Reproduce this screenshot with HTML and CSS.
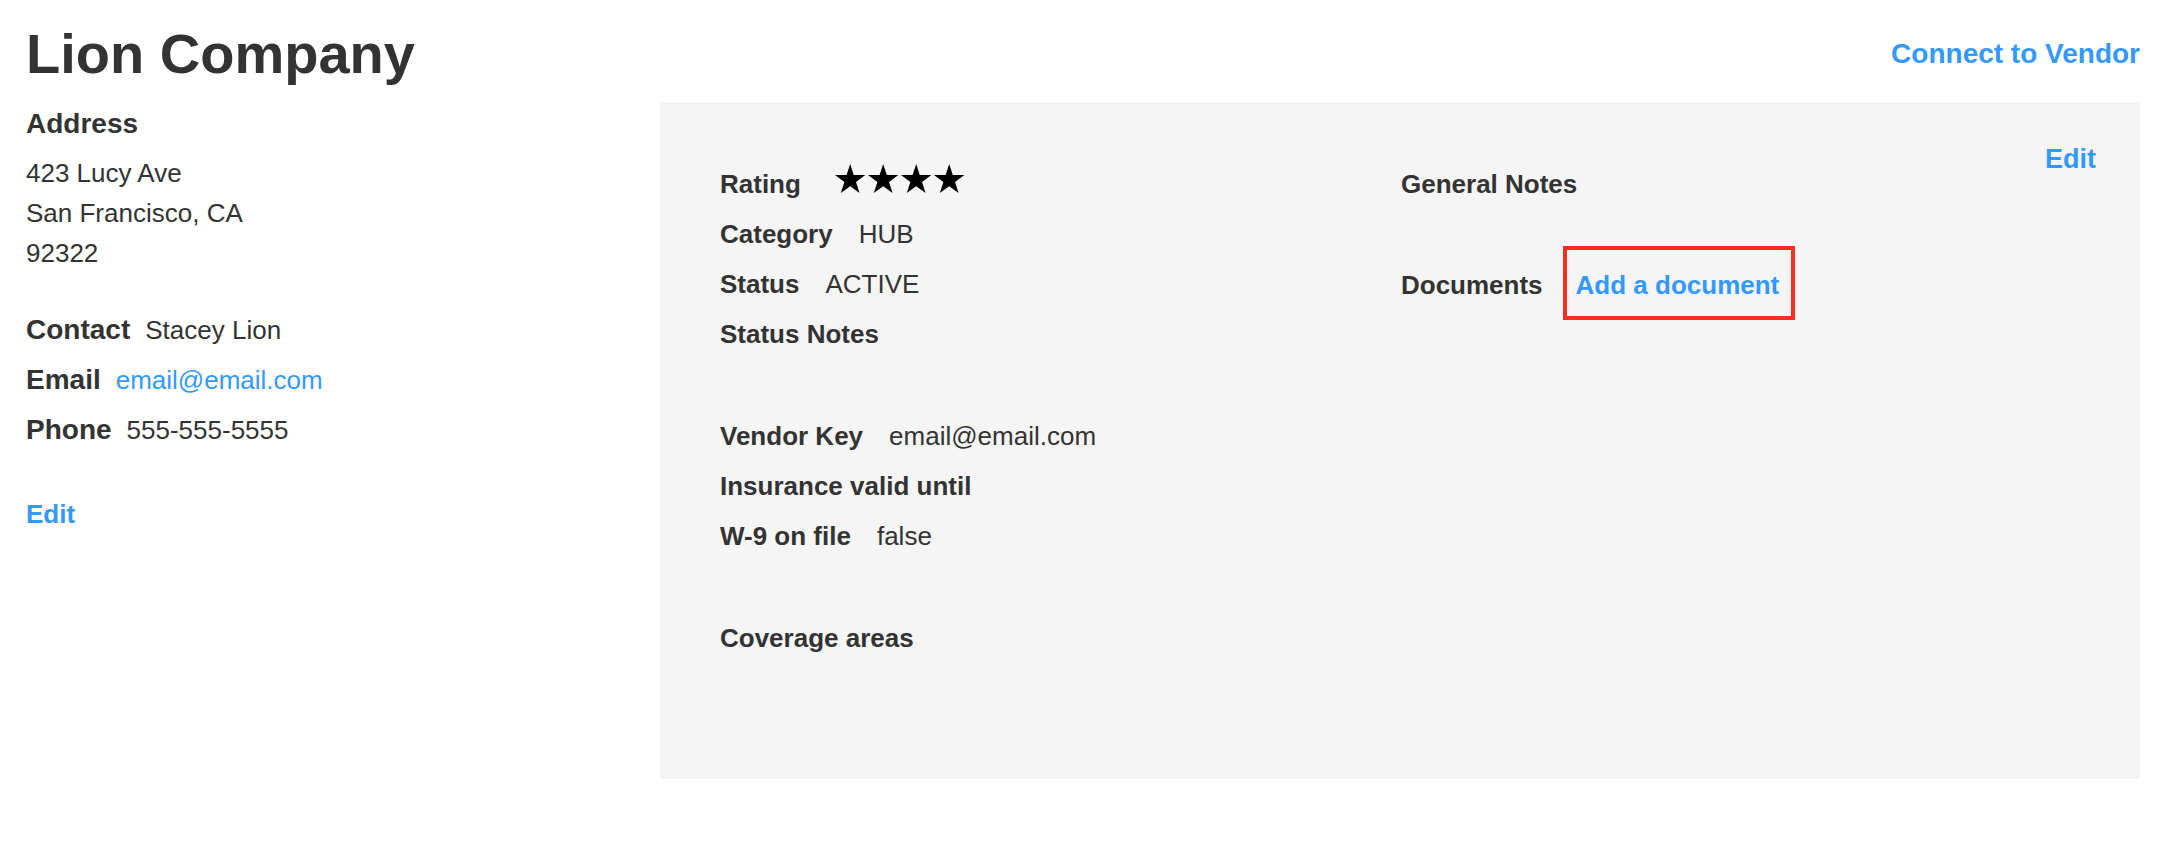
FILE: index.html
```html
<!DOCTYPE html>
<html lang="en">
<head>
<meta charset="utf-8">
<title>Lion Company</title>
<link rel="stylesheet" href="styles.css">
</head>
<body>
<div class="page">
  <header class="page-header">
    <h1 class="company-name">Lion Company</h1>
    <a class="link link-lg" href="#">Connect to Vendor</a>
  </header>

  <div class="content">
    <aside class="sidebar">
      <h2 class="section-title">Address</h2>
      <address class="address">
        <div>423 Lucy Ave</div>
        <div>San Francisco, CA</div>
        <div>92322</div>
      </address>

      <div class="contact">
        <div class="contact-row"><span class="contact-label">Contact</span><span class="contact-value">Stacey Lion</span></div>
        <div class="contact-row"><span class="contact-label">Email</span><a class="contact-value plain-link" href="#">email@email.com</a></div>
        <div class="contact-row"><span class="contact-label">Phone</span><span class="contact-value">555-555-5555</span></div>
      </div>

      <div class="sidebar-actions"><a class="link" href="#">Edit</a></div>
    </aside>

    <section class="panel">
      <a class="link panel-edit" href="#">Edit</a>

      <div class="panel-col panel-col-main">
        <div class="field-group">
          <div class="field">
            <span class="field-label">Rating</span>
            <span class="stars">
              <svg class="star" viewBox="2.45 0 95.1 90.45"><polygon points="50,0 61.23,34.55 97.55,34.55 68.16,55.9 79.39,90.45 50,69.1 20.61,90.45 31.84,55.9 2.45,34.55 38.77,34.55"/></svg>
              <svg class="star" viewBox="2.45 0 95.1 90.45"><polygon points="50,0 61.23,34.55 97.55,34.55 68.16,55.9 79.39,90.45 50,69.1 20.61,90.45 31.84,55.9 2.45,34.55 38.77,34.55"/></svg>
              <svg class="star" viewBox="2.45 0 95.1 90.45"><polygon points="50,0 61.23,34.55 97.55,34.55 68.16,55.9 79.39,90.45 50,69.1 20.61,90.45 31.84,55.9 2.45,34.55 38.77,34.55"/></svg>
              <svg class="star" viewBox="2.45 0 95.1 90.45"><polygon points="50,0 61.23,34.55 97.55,34.55 68.16,55.9 79.39,90.45 50,69.1 20.61,90.45 31.84,55.9 2.45,34.55 38.77,34.55"/></svg>
            </span>
          </div>
          <div class="field"><span class="field-label">Category</span><span class="field-value">HUB</span></div>
          <div class="field"><span class="field-label">Status</span><span class="field-value">ACTIVE</span></div>
          <div class="field"><span class="field-label">Status Notes</span></div>
        </div>

        <div class="field-group">
          <div class="field"><span class="field-label">Vendor Key</span><span class="field-value">email@email.com</span></div>
          <div class="field"><span class="field-label">Insurance valid until</span></div>
          <div class="field"><span class="field-label">W-9 on file</span><span class="field-value">false</span></div>
        </div>

        <div class="field-group last">
          <div class="field"><span class="field-label">Coverage areas</span></div>
        </div>
      </div>

      <div class="panel-col panel-col-side">
        <div class="field notes-field"><span class="field-label">General Notes</span></div>
        <div class="field docs-field">
          <span class="field-label">Documents</span>
          <a class="link doc-link" href="#">Add a document</a>
        </div>
      </div>
    </section>
  </div>
</div>
</body>
</html>
```

FILE: styles.css
```css
* {
  box-sizing: border-box;
}

body {
  margin: 0;
  background: #ffffff;
  color: #333333;
  font-family: "Liberation Sans", Arial, Helvetica, sans-serif;
}

.page {
  padding: 22px 26px 0;
}

.page-header {
  display: flex;
  justify-content: space-between;
  align-items: center;
}

.company-name {
  margin: 0;
  font-size: 56px;
  line-height: 64px;
  font-weight: 700;
}

.link {
  color: #3399ff;
  font-weight: 700;
  font-size: 26px;
  text-decoration: none;
}

.link-lg {
  font-size: 28px;
  line-height: 32px;
}

.content {
  display: flex;
  margin-top: 16px;
}

/* Sidebar */
.sidebar {
  flex: none;
  width: 634px;
  padding-top: 2px;
}

.section-title {
  margin: 0 0 9px;
  font-size: 28px;
  line-height: 40px;
  font-weight: 700;
}

.address {
  font-style: normal;
  font-size: 26px;
  line-height: 40px;
}

.contact {
  margin-top: 32px;
}

.contact-row {
  display: flex;
  align-items: baseline;
  gap: 15px;
  height: 50px;
  line-height: 50px;
}

.contact-label {
  font-size: 28px;
  font-weight: 700;
}

.contact-value {
  font-size: 26px;
}

.plain-link {
  color: #3399ff;
  text-decoration: none;
}

.sidebar-actions {
  margin-top: 39px;
  line-height: 40px;
}

/* Panel */
.panel {
  position: relative;
  flex: 1;
  display: flex;
  background: #f5f5f5;
  padding: 57px 60px 116px;
}

.panel-edit {
  position: absolute;
  top: 41px;
  right: 44px;
  font-size: 27px;
  line-height: 32px;
}

.panel-col-main {
  flex: none;
  width: 681px;
}

.panel-col-side {
  flex: 1;
}

.field-group {
  margin-bottom: 52px;
}

.field-group.last {
  margin-bottom: 0;
}

.field {
  display: flex;
  align-items: baseline;
  gap: 26px;
  height: 50px;
  line-height: 50px;
  font-size: 26px;
}

.field-label {
  font-weight: 700;
}

.stars {
  display: flex;
  gap: 2.8px;
  margin-left: 8px;
  line-height: 0;
}

.star {
  display: block;
  width: 30.4px;
  height: 29px;
  fill: #000000;
}

.notes-field {
  margin-bottom: 37px;
}

.docs-field {
  height: auto;
  gap: 20px;
}

.doc-link {
  display: inline-block;
  padding: 5px 12px 0 9px;
  line-height: 61px;
  border: 4px solid #fa2b1f;
}
```
